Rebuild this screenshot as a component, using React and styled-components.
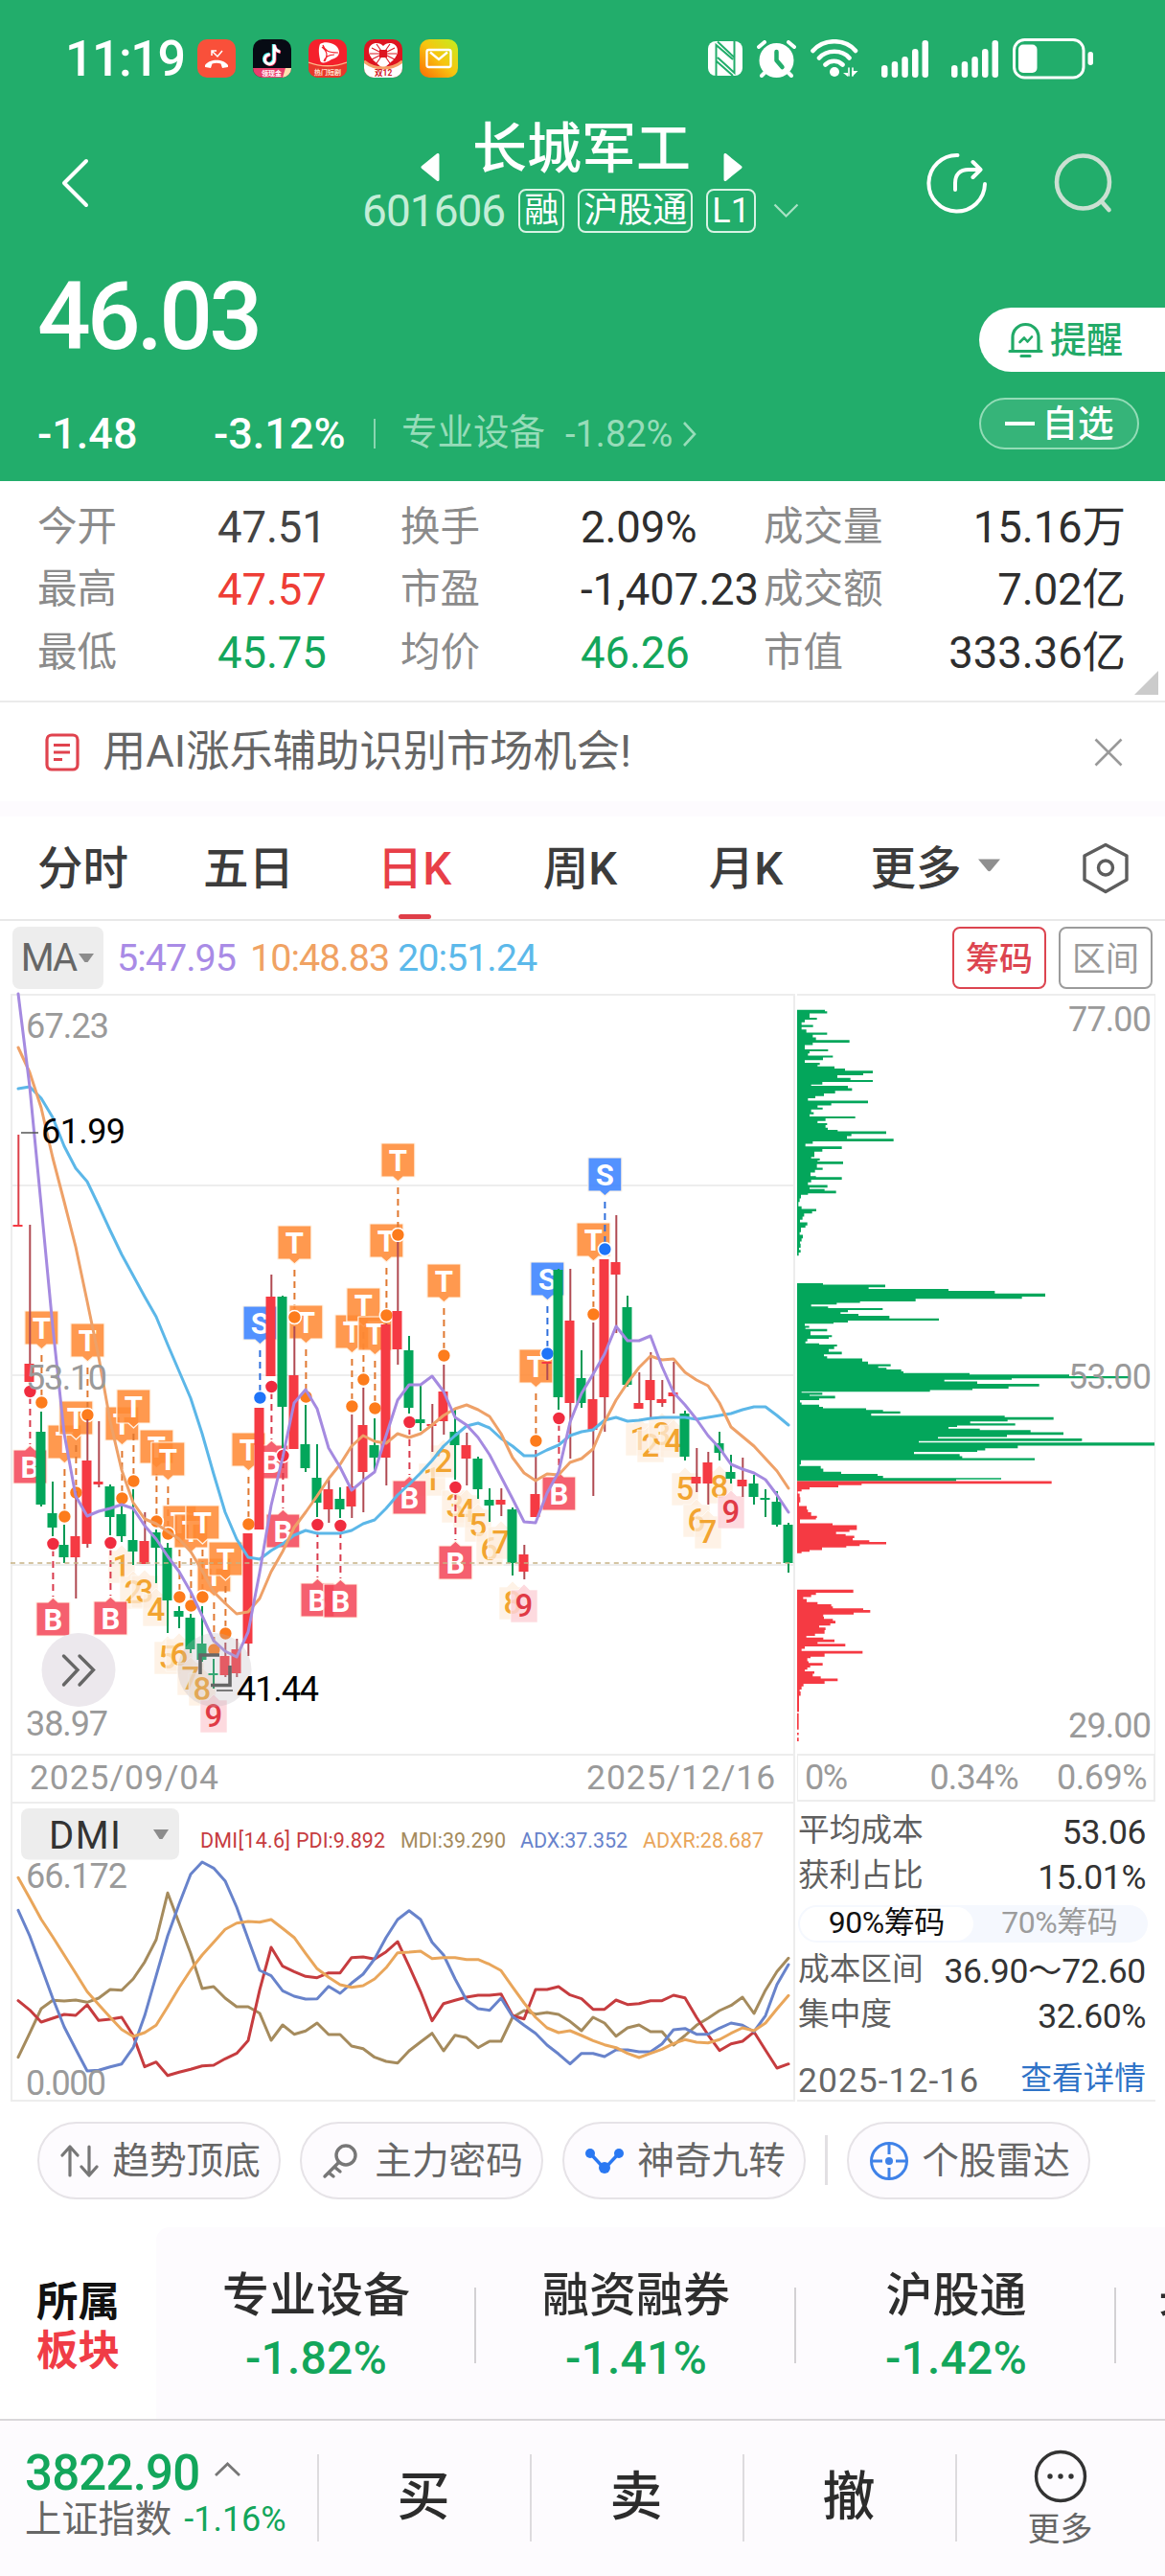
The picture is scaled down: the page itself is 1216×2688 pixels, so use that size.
import styled, { createGlobalStyle } from "styled-components";

const GREEN = "#03a65b";
const RED = "#f53a43";
const GREY = "#9a9a9a";

// [open/close direction, high, body top, body bottom, low]
const candles = [
  ["r", 1183, 1277, 1279, 1278], ["r", 1277, 1422, 1441, 1441], ["g", 1472, 1493, 1569, 1571],
  ["g", 1545, 1578, 1593, 1602], ["g", 1590, 1611, 1624, 1630], ["r", 1555, 1602, 1624, 1667],
  ["r", 1480, 1523, 1610, 1614], ["r", 1482, 1545, 1548, 1551], ["g", 1548, 1550, 1582, 1601],
  ["g", 1568, 1579, 1602, 1608], ["g", 1553, 1606, 1618, 1632], ["r", 1577, 1607, 1631, 1631],
  ["g", 1595, 1598, 1614, 1651], ["g", 1609, 1614, 1669, 1703], ["g", 1675, 1680, 1686, 1698],
  ["g", 1683, 1687, 1720, 1724], ["g", 1675, 1714, 1731, 1733], ["g", 1730, 1745, 1747, 1761],
  ["r", 1713, 1727, 1747, 1749], ["r", 1709, 1720, 1745, 1749], ["r", 1599, 1599, 1714, 1727],
  ["r", 1468, 1468, 1595, 1595], ["r", 1329, 1352, 1435, 1435], ["g", 1351, 1352, 1467, 1510],
  ["r", 1383, 1434, 1511, 1511], ["g", 1465, 1506, 1531, 1535], ["g", 1506, 1541, 1567, 1582],
  ["r", 1543, 1553, 1574, 1588], ["g", 1551, 1563, 1574, 1583], ["r", 1475, 1550, 1571, 1583],
  ["r", 1447, 1486, 1535, 1577], ["g", 1479, 1507, 1520, 1533], ["r", 1380, 1381, 1520, 1549],
  ["r", 1295, 1367, 1407, 1423], ["g", 1393, 1408, 1468, 1474], ["g", 1445, 1480, 1484, 1492],
  ["r", 1464, 1485, 1487, 1514], ["r", 1423, 1451, 1482, 1496], ["g", 1468, 1493, 1507, 1543],
  ["r", 1494, 1507, 1521, 1549], ["g", 1519, 1521, 1553, 1563], ["g", 1552, 1564, 1570, 1587],
  ["r", 1552, 1564, 1569, 1581], ["g", 1572, 1574, 1630, 1643], ["r", 1611, 1621, 1639, 1647],
  ["r", 1512, 1558, 1582, 1582], ["r", 1420, 1420, 1422, 1439], ["g", 1323, 1324, 1457, 1470],
  ["r", 1323, 1377, 1463, 1521], ["g", 1408, 1437, 1463, 1468], ["r", 1379, 1459, 1491, 1560],
  ["r", 1313, 1313, 1457, 1493], ["r", 1267, 1316, 1329, 1390], ["g", 1351, 1363, 1444, 1446],
  ["r", 1431, 1463, 1469, 1469], ["r", 1410, 1439, 1460, 1478], ["r", 1439, 1459, 1463, 1467],
  ["r", 1420, 1452, 1456, 1474], ["g", 1471, 1474, 1519, 1523], ["r", 1510, 1540, 1547, 1556],
  ["r", 1514, 1525, 1547, 1569], ["g", 1493, 1505, 1515, 1523], ["g", 1517, 1535, 1542, 1547],
  ["r", 1520, 1543, 1550, 1561], ["g", 1538, 1547, 1561, 1569], ["g", 1553, 1562, 1564, 1582],
  ["g", 1555, 1566, 1590, 1592], ["g", 1588, 1590, 1630, 1640],
];

const ma5 = [1036, 1133, 1257, 1383, 1495, 1560, 1581, 1576, 1573, 1569, 1573, 1591, 1605, 1623, 1639, 1660, 1685, 1711, 1722, 1728, 1702, 1640, 1570, 1520, 1463, 1449, 1469, 1510, 1530, 1554, 1544, 1535, 1497, 1460, 1444, 1444, 1435, 1451, 1478, 1486, 1499, 1517, 1540, 1563, 1587, 1588, 1557, 1535, 1483, 1453, 1433, 1412, 1383, 1398, 1398, 1393, 1425, 1452, 1465, 1480, 1497, 1510, 1527, 1532, 1536, 1543, 1559, 1577];
const ma10 = [1092, 1118, 1155, 1207, 1253, 1300, 1357, 1415, 1482, 1533, 1567, 1584, 1589, 1597, 1605, 1618, 1638, 1660, 1672, 1683, 1681, 1667, 1639, 1618, 1593, 1577, 1560, 1542, 1527, 1508, 1497, 1503, 1505, 1495, 1499, 1495, 1486, 1476, 1469, 1465, 1470, 1477, 1495, 1520, 1536, 1544, 1537, 1538, 1525, 1521, 1511, 1483, 1460, 1442, 1426, 1414, 1418, 1417, 1431, 1439, 1445, 1463, 1488, 1498, 1508, 1521, 1534, 1552];
const ma20 = [1135, 1133, 1145, 1165, 1195, 1218, 1232, 1257, 1283, 1308, 1330, 1352, 1373, 1402, 1430, 1458, 1495, 1537, 1577, 1605, 1624, 1626, 1617, 1610, 1601, 1596, 1599, 1599, 1599, 1596, 1589, 1585, 1573, 1559, 1548, 1536, 1523, 1508, 1497, 1487, 1484, 1489, 1500, 1508, 1518, 1518, 1512, 1507, 1497, 1493, 1491, 1481, 1478, 1482, 1481, 1479, 1478, 1478, 1478, 1480, 1478, 1476, 1474, 1470, 1467, 1467, 1476, 1486];

// [letter, candle index, flag top]
const flags = [
  ["B", 1, 1512], ["T", 2, 1367], ["B", 3, 1671], ["T", 4, 1486], ["T", 5, 1461], ["T", 6, 1380],
  ["B", 8, 1670], ["T", 9, 1467], ["T", 10, 1449], ["T", 12, 1491], ["T", 13, 1504], ["T", 14, 1570],
  ["T", 15, 1579], ["T", 16, 1570], ["T", 17, 1625], ["T", 18, 1608], ["T", 20, 1494], ["S", 21, 1362],
  ["B", 22, 1507], ["B", 23, 1579], ["T", 24, 1278], ["T", 25, 1361], ["B", 26, 1651], ["B", 28, 1652],
  ["T", 29, 1371], ["T", 30, 1343], ["T", 31, 1373], ["T", 32, 1276], ["T", 33, 1192], ["B", 34, 1544],
  ["T", 37, 1318], ["B", 38, 1612], ["T", 45, 1407], ["S", 46, 1316], ["B", 47, 1540], ["T", 50, 1275],
  ["S", 51, 1207],
];
const flagColors = {
  T: ["#ff8a35", "#fd7c1c", "#e07830"],
  S: ["#3982ff", "#1f74f8", "#2f6fdc"],
  B: ["#f4485a", "#f02c3f", "#d93a4c"],
};

// [digit, candle index, centre]
const turns = [
  [1, 9, 1633], [2, 10, 1660], [3, 11, 1659], [4, 12, 1678], [5, 13, 1728], [6, 14, 1725], [7, 15, 1750],
  [8, 16, 1761], [9, 17, 1789], [1, 36, 1542], [2, 37, 1523], [3, 38, 1570], [4, 39, 1575], [5, 40, 1590],
  [6, 41, 1615], [7, 42, 1608], [8, 43, 1671], [9, 44, 1674], [1, 54, 1500], [2, 55, 1507], [3, 56, 1495],
  [4, 57, 1502], [5, 58, 1552], [6, 59, 1585], [7, 60, 1597], [8, 61, 1550], [9, 62, 1576],
];

const chipsAbove = [
  [[42, 123], [45, 130], [49, 75], [57, 98], [61, 60], [66, 50], [71, 86], [75, 50], [80, 65], [86, 130], [90, 85], [95, 95], [100, 200], [105, 85], [110, 60], [118, 133], [122, 75], [126, 70], [130, 148], [134, 117], [139, 60], [144, 107], [148, 100], [151, 153], [155, 186], [159, 273], [164, 243], [168, 162], [173, 203], [177, 273], [181, 115], [186, 80], [188, 195], [193, 208], [198, 155], [203, 120], [208, 93], [212, 70], [217, 258], [222, 143], [226, 100], [230, 116], [234, 80], [239, 88], [243, 75], [247, 218], [251, 125], [256, 100], [260, 130], [264, 125], [269, 132], [273, 163], [276, 315], [281, 206], [285, 192], [290, 338], [295, 85], [300, 62], [305, 176], [310, 115], [315, 90], [325, 80], [328, 107], [332, 100], [334, 180], [339, 98], [346, 116], [350, 92], [355, 78], [362, 95], [364, 176], [369, 80], [374, 70], [379, 131], [384, 75], [387, 122], [390, 158], [395, 70], [398, 48], [405, 44], [412, 40], [420, 50], [425, 96], [430, 83], [434, 58], [440, 53], [446, 45], [451, 68], [457, 62], [461, 48], [470, 44], [475, 54], [482, 50], [488, 45], [492, 47], [500, 42], [504, 47], [509, 41], [515, 36]],
  [[568, 117], [571, 312], [576, 260], [579, 510], [583, 655], [588, 813], [594, 740], [598, 407], [603, 233], [606, 160], [609, 80], [613, 133], [616, 304], [620, 195], [624, 172], [627, 228], [631, 325], [636, 480], [640, 195], [644, 150], [646, 60], [650, 74], [654, 62], [656, 130], [661, 78], [668, 145], [672, 135], [675, 68], [680, 62], [684, 105], [686, 161], [690, 152], [695, 135], [700, 176], [705, 120], [709, 130], [713, 240], [719, 258], [724, 329], [728, 290], [731, 316], [734, 362], [738, 369], [741, 576], [744, 888], [747, 1077], [751, 708], [754, 497], [757, 600], [762, 794], [767, 698], [771, 585], [774, 452], [777, 50], [779, 115], [783, 75], [785, 155], [790, 105], [793, 45], [798, 50], [802, 105], [806, 117], [809, 252], [812, 305], [815, 359], [819, 268], [823, 686], [826, 839], [831, 695], [834, 578], [838, 719], [842, 537], [845, 510], [848, 608], [851, 767], [855, 870], [860, 693], [864, 477], [867, 928], [872, 417], [875, 1155], [881, 727], [886, 625], [890, 600], [893, 402], [897, 545], [901, 553], [905, 780], [909, 48], [917, 44], [920, 110], [925, 118], [931, 174], [935, 288], [939, 305], [943, 675], [946, 534], [949, 36]],
];
const chipsBelow = [
  [[949, 833], [954, 238], [957, 165], [961, 75], [965, 50], [969, 38], [973, 44], [980, 46], [990, 42], [997, 66], [1004, 70], [1009, 80], [1016, 98], [1020, 95], [1023, 45], [1030, 147], [1034, 223], [1043, 200], [1047, 158], [1051, 188], [1054, 215], [1059, 210], [1063, 262], [1066, 315], [1071, 232], [1074, 190], [1077, 114], [1082, 75], [1085, 50], [1088, 36]],
  [[1158, 212], [1164, 95], [1168, 80], [1172, 55], [1176, 66], [1182, 100], [1186, 143], [1190, 148], [1194, 243], [1197, 265], [1202, 213], [1206, 118], [1210, 120], [1214, 148], [1218, 156], [1223, 140], [1227, 105], [1231, 125], [1236, 122], [1243, 92], [1247, 65], [1250, 118], [1254, 153], [1259, 100], [1262, 187], [1267, 60], [1272, 50], [1276, 241], [1281, 122], [1287, 78], [1290, 68], [1296, 72], [1299, 116], [1304, 77], [1308, 68], [1312, 60], [1315, 90], [1320, 85], [1325, 110], [1329, 163], [1334, 122], [1339, 56], [1344, 50], [1350, 44], [1354, 47], [1362, 42], [1393, 36], [1396, 41], [1427, 36], [1433, 41], [1438, 36], [1443, 41], [1450, 36]],
];

const dmi = [
  ["#a58b5d", [980, 905, 828, 802, 804, 801, 808, 795, 768, 770, 735, 682, 612, 466, 560, 655, 765, 759, 795, 822, 822, 842, 927, 879, 908, 898, 873, 909, 909, 945, 953, 980, 993, 998, 960, 932, 905, 960, 911, 919, 950, 930, 930, 855, 834, 845, 840, 846, 868, 897, 855, 873, 914, 888, 879, 900, 900, 942, 912, 880, 858, 834, 818, 792, 843, 770, 712, 670]],
  ["#c63c3f", [803, 832, 870, 858, 846, 849, 816, 865, 861, 855, 912, 1010, 995, 1037, 1027, 1018, 1007, 1005, 985, 968, 928, 770, 636, 695, 712, 727, 731, 716, 716, 668, 666, 673, 650, 618, 695, 775, 866, 812, 802, 792, 786, 786, 782, 850, 860, 768, 768, 759, 785, 797, 830, 830, 801, 815, 812, 803, 803, 786, 794, 855, 910, 959, 938, 930, 901, 958, 1014, 1001]],
  ["#6883cb", [520, 600, 697, 795, 885, 955, 1023, 1021, 1010, 1001, 950, 850, 725, 600, 500, 407, 369, 388, 428, 510, 610, 708, 725, 772, 789, 798, 797, 758, 780, 748, 720, 672, 605, 549, 521, 549, 620, 660, 735, 802, 828, 833, 795, 853, 880, 905, 942, 970, 1001, 968, 968, 978, 957, 957, 963, 963, 938, 894, 890, 908, 908, 889, 873, 880, 900, 850, 752, 690]],
  ["#e9a65b", [418, 482, 548, 603, 660, 717, 775, 815, 855, 893, 915, 903, 880, 822, 762, 707, 660, 620, 580, 560, 555, 557, 549, 577, 605, 655, 703, 730, 753, 761, 756, 735, 700, 653, 651, 648, 671, 668, 668, 674, 674, 689, 709, 760, 810, 855, 888, 903, 897, 912, 928, 941, 950, 968, 981, 968, 955, 937, 925, 933, 935, 925, 905, 888, 897, 873, 829, 787]],
];

const stats = [
  [["今开", "47.51", "#444"], ["换手", "2.09%"], ["成交量", "15.16万"]],
  [["最高", "47.57", "#ee3d35"], ["市盈", "-1,407.23"], ["成交额", "7.02亿"]],
  [["最低", "45.75", "#13a65b"], ["均价", "46.26", "#13a65b"], ["市值", "333.36亿"]],
];

const px = (k) => 19 + 12 * k;
const linePoints = (ys) => ys.map((y, k) => `${px(k)},${y}`).join(" ");

const stepPath = (rows) => {
  let d = `M36 ${rows[0][0]}`;
  rows.forEach(([y, x]) => {
    d += `V${y}H${x}`;
  });
  return d + "H36Z";
};

const ChartText = ({ x, y, w, size = 36, fill = GREY, anchor = "start", children }) => (
  <text x={x} y={y} textLength={w} fontSize={size} fill={fill} textAnchor={anchor} lengthAdjust="spacing">
    {children}
  </text>
);

const Flag = ({ kind, k, top }) => {
  const x = px(k) + 0.4;
  const fill = flagColors[kind][0];
  const up = kind === "B";
  const d = up
    ? `M${x - 17.5} ${top}h12l5.5-5 5.5 5h12v35h-35z`
    : `M${x - 17.5} ${top}h35v35h-12l-5.5 5-5.5-5h-12z`;
  return (
    <g>
      <line
        x1={x} x2={x}
        y1={up ? top - 55 : top + 46}
        y2={up ? top - 6 : top + 90}
        stroke={flagColors[kind][2]} strokeWidth="2" strokeDasharray="7 5"
      />
      <path d={d} fill={fill} fillOpacity="0.87" stroke="#fff3e6" strokeWidth="1.2" strokeLinejoin="round" />
      <text x={x} y={top + 28.5} fontSize="31" fontWeight="700" fill="#fff" textAnchor="middle">{kind}</text>
    </g>
  );
};

const FlagDot = ({ kind, k, top }) => (
  <circle
    cx={px(k) + 0.4}
    cy={kind === "B" ? top - 61 : top + 95.5}
    r="7" fill={flagColors[kind][1]} stroke="#fff" strokeWidth="1.6"
  />
);

const Turn = ({ n, k, y }) => {
  const last = n === 9;
  const x = px(k);
  return (
    <g>
      <path
        d={`M${x - 14} ${y - 16}h8l6-6 6 6h8v34h-28z`}
        fill={last ? "#fdd3d9" : "#fdeede"} fillOpacity={last ? 0.85 : 0.75}
        stroke="#fff" strokeOpacity="0.6" strokeWidth="1"
      />
      <text x={x} y={y + 12} fontSize="33" fontWeight="500" fill={last ? "#e03a45" : "#f2a430"} textAnchor="middle">{n}</text>
    </g>
  );
};

const CandleChart = () => (
  <ChartSvg viewBox="13 1038 815 791" width="815" height="791">
    {[1236, 1434, 1632].map((y) => (
      <line key={y} x1="13" x2="828" y1={y} y2={y} stroke="#ededed" strokeWidth="2" />
    ))}
    {turns.map(([n, k, y], i) => <Turn key={i} n={n} k={k} y={y} />)}
    {flags.map(([kind, k, top]) => <Flag key={k} kind={kind} k={k} top={top} />)}
    {flags.map(([kind, k, top]) => <FlagDot key={k} kind={kind} k={k} top={top} />)}
    {candles.map(([dir, hi, top, bottom, lo], k) => {
      const x = px(k) + (dir === "r" ? 0.3 : 0);
      return (
        <g key={k}>
          <line x1={x} x2={x} y1={hi} y2={Math.max(lo, bottom)} stroke={dir === "r" ? (k === 0 ? "#dc4049" : "#b04a52") : "#069a55"} strokeWidth="2" />
          <rect x={px(k) - 5.5} y={top} width="10" height={bottom - top} fill={dir === "r" ? RED : GREEN} />
        </g>
      );
    })}
    <line x1="11" x2="829" y1="1630" y2="1630" stroke="#c6b184" strokeWidth="1.7" strokeDasharray="5 4.4" />
    <polyline points={linePoints(ma20)} stroke="#5cb7e8" />
    <polyline points={linePoints(ma10)} stroke="#eea168" />
    <polyline points={linePoints(ma5)} stroke="#a58ae0" />
    <ChartText x={27} y={1082} w={87}>67.23</ChartText>
    <ChartText x={27} y={1449} w={85}>53.10</ChartText>
    <ChartText x={27} y={1810} w={86}>38.97</ChartText>
    <line x1="22" x2="40" y1="1181" y2="1181" stroke="#555" strokeWidth="1.5" />
    <ChartText x={43} y={1192} w={88} fill="#000">61.99</ChartText>

    <circle cx="82" cy="1741.5" r="38.5" fill="#ece8ed" />
    <path d="M66.5 1727L81 1741.5 66.5 1757M83 1727l14.5 14.5L83 1757" fill="none" stroke="#666" strokeWidth="3.4" strokeLinecap="round" />
    <circle cx="224" cy="1741.5" r="38.5" fill="#b9b3ba" fillOpacity="0.28" />
    <path d="M209 1746v-20h20M240 1737v20.500h-20" fill="none" stroke="#666" strokeWidth="3.6" />
    <line x1="226" x2="243" y1="1763" y2="1763" stroke="#555" strokeWidth="1.5" />
    <ChartText x={247} y={1774} w={86} fill="#000">41.44</ChartText>
  </ChartSvg>
);

const ChipsChart = () => (
  <ChipsWrap>
    <ChartSvg viewBox="36 14.8 1119 1459" width="373" height="791" preserveAspectRatio="none">
      {chipsAbove.map((rows, i) => <path key={i} d={stepPath(rows)} fill={GREEN} />)}
      {chipsBelow.map((rows, i) => <path key={i} d={stepPath(rows)} fill={RED} />)}
    </ChartSvg>
    <ChipsScale>
      <Num $size={36} $ls={-0.9}>77.00</Num>
      <Num $size={36} $ls={-0.9}>53.00</Num>
      <Num $size={36} $ls={-0.9}>29.00</Num>
    </ChipsScale>
  </ChipsWrap>
);

const DmiChart = () => (
  <ChartSvg viewBox="13 1882 815 309" width="815" height="309">
    {dmi.map(([color, ys]) => (
      <polyline key={color} points={linePoints(ys.map((y) => +(1820 + y / 3).toFixed(1)))} stroke={color} />
    ))}
    <rect x="22" y="1887" width="165" height="53.500" rx="8" fill="#ededed" />
    <ChartText x={51} y={1928.5} w={75} size={40} fill="#333">DMI</ChartText>
    <path d="M160 1909h16l-6.500 10h-3z" fill="#8c8c8c" />
    <ChartText x={209} y={1928} w={94} size={21.5} fill="#c63c3f">DMI[14.6]</ChartText>
    <ChartText x={309} y={1928} w={93} size={21.5} fill="#c63c3f">PDI:9.892</ChartText>
    <ChartText x={418} y={1928} w={110} size={21.5} fill="#a58b5d">MDI:39.290</ChartText>
    <ChartText x={543} y={1928} w={112} size={21.5} fill="#6883cb">ADX:37.352</ChartText>
    <ChartText x={671} y={1928} w={126} size={21.5} fill="#e9a65b">ADXR:28.687</ChartText>
    <ChartText x={27} y={1969.5} w={106}>66.172</ChartText>
    <ChartText x={27} y={2185.5} w={84}>0.000</ChartText>
  </ChartSvg>
);

const Signal = () => (
  <svg width="49" height="39" viewBox="0 0 49 39" fill="#fff">
    <rect x="0" y="26" width="6.500" height="13" rx="3.200" />
    <rect x="10.700" y="22" width="6.500" height="17" rx="3.200" />
    <rect x="21.300" y="17" width="6.500" height="22" rx="3.200" />
    <rect x="32" y="9" width="6.500" height="30" rx="3.200" />
    <rect x="42.500" y="0" width="6.500" height="39" rx="3.200" />
  </svg>
);

const StatusBar = () => (
  <Status>
    <Clock>11:19</Clock>
    <AppIcons>
      <svg width="40" height="40" viewBox="0 0 40 40">
        <rect width="40" height="40" rx="10" fill="#f9503a" />
        <path d="M8 27c5-7 19-7 24 0v2l-6 1-1.500-4.500c-3-1-6-1-9 0L14 30l-6-1z" fill="#fff" />
        <path d="M15 17v-5h5M15 12l6 6 5-6" fill="none" stroke="#fff" strokeWidth="1.500" />
      </svg>
      <svg width="40" height="40" viewBox="0 0 40 40">
        <clipPath id="appClip"><rect width="40" height="40" rx="10" /></clipPath>
        <g clipPath="url(#appClip)">
          <rect width="40" height="40" fill="#070b14" />
          <path d="M21.500 5v15.500a5 5 0 1 1-4.500-5M21.500 6c.7 4 3 6 6 6.500" fill="none" stroke="#35e3e3" strokeWidth="3.400" />
          <path d="M23 6v15.500a5 5 0 1 1-4.500-5M23 7c.7 4 3 6 6 6.500" fill="none" stroke="#f5365c" strokeWidth="3.200" />
          <path d="M22.300 5.500V21a5 5 0 1 1-4.500-5M22.300 6.500c.7 4 3 6 6 6.500" fill="none" stroke="#fff" strokeWidth="3" />
          <path d="M0 30h40v10H0z" fill="#e93f6d" />
          <path d="M34 30h6v10h-9z" fill="#ffe3b0" />
          <text x="9" y="37.500" fontSize="7" fontWeight="700" fill="#fff">领现金</text>
        </g>
      </svg>
      <svg width="40" height="40" viewBox="0 0 40 40">
        <g clipPath="url(#appClip)">
          <rect width="40" height="40" fill="#f5202c" />
          <path d="M12 5c6-4 19-1 20 8 0 5-4 7-8 8-6 4-12 5-12 0-1-5-2-11 0-16z" fill="#fff" />
          <path d="M15 6c2 6 6 8 16 8M27 16c-5 0-9 1-11 7M14 8c6 5 6 8 3 15" fill="none" stroke="#f5202c" strokeWidth="1.200" />
          <path d="M0 24c12 5 28 5 40 0v16H0z" fill="#e8372b" />
          <path d="M0 24c12 5 28 5 40 0" fill="none" stroke="#ffb98a" strokeWidth="1.300" />
          <text x="6" y="36.500" fontSize="7" fontWeight="700" fill="#ffe2cf">热门短剧</text>
        </g>
      </svg>
      <svg width="40" height="40" viewBox="0 0 40 40">
        <g clipPath="url(#appClip)">
          <rect width="40" height="40" fill="#dd1420" />
          <path d="M20 7c4-5 15-4 15 5 0 8-8 12-15 19C13 24 5 20 5 12c0-9 11-10 15-5z" fill="#fff" />
          <path d="M8 9l24 12M32 9L8 21M13 5l14 20M27 5L13 25M6 15h28" stroke="#dd1420" strokeWidth="1.100" />
          <rect x="16" y="11" width="8" height="8" fill="#dd1420" />
          <path d="M0 23c6 5 12 7 20 7s14-2 20-7v17H0z" fill="#fff" />
          <path d="M0 23c6 5 12 7 20 7s14-2 20-7" fill="none" stroke="#f6a067" strokeWidth="3" />
          <text x="11" y="38" fontSize="8.500" fontWeight="700" fill="#d21825">双12</text>
        </g>
      </svg>
      <svg width="40" height="40" viewBox="0 0 40 40">
        <linearGradient id="mailBg" x1="0" y1="1" x2="1" y2="0">
          <stop offset="0" stopColor="#fb6a05" />
          <stop offset="0.5" stopColor="#f8c40f" />
          <stop offset="1" stopColor="#c3ef20" />
        </linearGradient>
        <rect width="40" height="40" rx="10" fill="url(#mailBg)" />
        <rect x="7.500" y="11" width="25" height="18" rx="2" fill="none" stroke="#fff" strokeWidth="2.300" />
        <path d="M11 13.500l9 7.500 9-7.500" fill="none" stroke="#fff" strokeWidth="2.300" />
      </svg>
    </AppIcons>
    <SystemIcons>
      <svg width="36" height="36" viewBox="0 0 36 36">
        <rect width="36" height="36" rx="8" fill="#fff" />
        <path d="M8.500 36V4L26 19M10 0.500l18 17M27.500 0v33L10 17M26 36L9 21" fill="none" stroke="#22ad6b" strokeWidth="2" />
      </svg>
      <svg width="41" height="39" viewBox="0 0 41 39">
        <circle cx="20.500" cy="21" r="18" fill="#fff" />
        <path d="M2 7l6-5M39 7l-6-5M9 33l-4 4M32 33l4 4" stroke="#fff" strokeWidth="4" strokeLinecap="round" />
        <path d="M20.500 12v9l6 7" fill="none" stroke="#22ad6b" strokeWidth="4.500" strokeLinecap="round" strokeLinejoin="round" />
      </svg>
      <svg width="50" height="40" viewBox="0 0 50 40" fill="none" stroke="#fff" strokeWidth="4.600" strokeLinecap="round">
        <path d="M2.500 12C14-1 36-1 47 12M9 19.500c8-9 24-9 31.500 0M15.500 26.500c5-5 13-5 18 0" />
        <circle cx="25" cy="34" r="5" fill="#fff" stroke="none" />
        <path d="M39 29v10l-5-4h5zM43 29v10M43.500 33l6 0-6 6z" fill="#fff" stroke="none" />
        <path d="M40 30v8M44 30v8" strokeWidth="1.600" />
      </svg>
      <Signal />
      <Signal />
      <svg width="86" height="43" viewBox="0 0 86 43">
        <rect x="1.500" y="1.500" width="72.500" height="39.500" rx="11" fill="none" stroke="#fff" strokeWidth="3" />
        <rect x="6" y="6.500" width="19.500" height="29.500" rx="5" fill="#fff" />
        <rect x="78.500" y="14" width="5.500" height="14" rx="2.700" fill="#fff" />
      </svg>
    </SystemIcons>
  </Status>
);

const Header = () => (
  <Top>
    <StatusBar />
    <Nav>
      <svg width="30" height="52" viewBox="0 0 30 52">
        <path d="M27 3L4 26l23 23" fill="none" stroke="#fff" strokeWidth="4" strokeLinecap="round" strokeLinejoin="round" />
      </svg>
      <TitleBlock>
        <TitleRow>
          <svg width="20" height="29" viewBox="0 0 20 29"><path d="M18 1.500v26L2 14.500z" fill="#fff" stroke="#fff" strokeWidth="3" strokeLinejoin="round" /></svg>
          <Title>长城军工</Title>
          <svg width="20" height="29" viewBox="0 0 20 29"><path d="M2 1.500v26l16-13z" fill="#fff" stroke="#fff" strokeWidth="3" strokeLinejoin="round" /></svg>
        </TitleRow>
        <CodeRow>
          <Num $size={46} $ls={-1} $color="#c3edd7">601606</Num>
          <Tag>融</Tag>
          <Tag>沪股通</Tag>
          <Tag>L1</Tag>
          <svg width="27" height="16" viewBox="0 0 27 16"><path d="M1.500 1.500L13.500 13.500l12-12" fill="none" stroke="#a8e2c4" strokeWidth="2.200" /></svg>
        </CodeRow>
      </TitleBlock>
      <NavIcons>
        <svg width="64" height="64" viewBox="0 0 64 64" fill="none" stroke="#fff" strokeWidth="4" strokeLinecap="round" strokeLinejoin="round">
          <path d="M32.500 3A29.300 29.300 0 1 0 61 33" />
          <path d="M30 39v-7c0-9 5-14 14-14h11M48.500 10l8 8-8 8" />
        </svg>
        <svg width="62" height="64" viewBox="0 0 62 64" fill="none" stroke="#cae0d2" strokeWidth="4.600" strokeLinecap="round">
          <circle cx="30.500" cy="31" r="27.500" />
          <path d="M49.500 51l8 9" />
        </svg>
      </NavIcons>
    </Nav>
    <PriceRow>
      <Num $size={98} $ls={-3.8} $weight={500} $color="#fff">46.03</Num>
      <RemindPill>
        <svg width="37" height="40" viewBox="0 0 37 40" fill="none" stroke="#22aa68" strokeWidth="3.200" strokeLinejoin="round" strokeLinecap="round">
          <path d="M5 31V17a13.500 13.500 0 0 1 27 0v14M2 31.500h33M14 36.500h9" />
          <path d="M12.500 22l4.500-4.500 3.500 4 4.500-5" strokeWidth="2.600" />
        </svg>
        提醒
      </RemindPill>
    </PriceRow>
    <ChangeRow>
      <Change $w={184}>-1.48</Change>
      <Change $w={165}>-3.12%</Change>
      <ThinLine />
      <Industry>专业设备</Industry>
      <Num $size={38} $color="#97dcb9">-1.82%</Num>
      <svg width="16" height="28" viewBox="0 0 16 28"><path d="M2 2l11 12L2 26" fill="none" stroke="#97dcb9" strokeWidth="2.600" /></svg>
      <WatchPill><Dash />自选</WatchPill>
    </ChangeRow>
  </Top>
);

const Quote = () => (
  <StatsPanel>
    {stats.flat().map(([label, value, color], i) => (
      <Stat key={label} $wide={i % 3 === 2}>
        <StatLabel>{label}</StatLabel>
        <StatValue $color={color}>{value}</StatValue>
      </Stat>
    ))}
    <Corner />
  </StatsPanel>
);

const App = () => (
  <Page>
    <GlobalStyle />
    <Header />
    <Quote />
    <Banner>
      <svg width="36" height="40" viewBox="0 0 36 40" fill="none" stroke="#e0434e" strokeWidth="3.200">
        <rect x="2" y="2" width="32" height="36" rx="5" />
        <path d="M9 12.500h17M9 20h17M9 27.500h9" />
      </svg>
      <BannerText>用AI涨乐辅助识别市场机会!</BannerText>
      <svg width="30" height="30" viewBox="0 0 30 30"><path d="M1.500 1.500l27 27M28.500 1.500l-27 27" stroke="#999" strokeWidth="2.600" /></svg>
    </Banner>
    <Band />
    <Tabs>
      {["分时", "五日", "日K", "周K", "月K"].map((t) => (
        <Tab key={t} $active={t === "日K"}>{t}</Tab>
      ))}
      <Tab $more>
        更多
        <svg width="25" height="14" viewBox="0 0 25 14"><path d="M1 0.500h23L14 12.500q-1.500 1.500-3 0z" fill="#8f8f8f" /></svg>
      </Tab>
      <svg width="50" height="54" viewBox="0 0 50 54" fill="none" stroke="#5d5d5d" strokeWidth="3.400" strokeLinejoin="round">
        <path d="M25 2.500L47 14v25L25 51.500 3 39V14z" />
        <circle cx="25" cy="26.500" r="7.500" />
      </svg>
    </Tabs>
    <MaRow>
      <MaChip>
        MA
        <svg width="18" height="10" viewBox="0 0 18 10"><path d="M1 0h16l-6.500 9h-3z" fill="#8c8c8c" /></svg>
      </MaChip>
      <MaValue $w={139} $color="#a98be6">5:47.95</MaValue>
      <MaValue $w={154} $color="#f0a263">10:48.83</MaValue>
      <MaValue $w={160} $color="#5cb9ea">20:51.24</MaValue>
      <ModeButton $active>筹码</ModeButton>
      <ModeButton>区间</ModeButton>
    </MaRow>
    <Charts>
      <Column>
        <Box $h={795}><CandleChart /></Box>
        <Dates>
          <Num $size={35.5} $ls={0.9}>2025/09/04</Num>
          <Num $size={35.5} $ls={0.9}>2025/12/16</Num>
        </Dates>
        <Box $h={311} $noTop><DmiChart /></Box>
      </Column>
      <Column>
        <SideBox><ChipsChart /></SideBox>
        <Percents>
          <Num $size={36} $ls={-1.5}>0%</Num>
          <Num $size={36} $ls={-0.8}>0.34%</Num>
          <Num $size={36} $ls={-0.5}>0.69%</Num>
        </Percents>
        <Info>
          <InfoRow><span>平均成本</span><Num $size={35.5} $ls={-0.4} $color="#333">53.06</Num></InfoRow>
          <InfoRow><span>获利占比</span><Num $size={35.5} $ls={-0.4} $color="#333">15.01%</Num></InfoRow>
          <Toggle>
            <ToggleItem $active>90%筹码</ToggleItem>
            <ToggleItem>70%筹码</ToggleItem>
          </Toggle>
          <InfoRow><span>成本区间</span><Num $size={35.5} $ls={-0.3} $color="#333">36.90～72.60</Num></InfoRow>
          <InfoRow><span>集中度</span><Num $size={35.5} $ls={-0.4} $color="#333">32.60%</Num></InfoRow>
          <InfoFoot><Num $size={35.5} $ls={1} $color="#666">2025-12-16</Num><a>查看详情</a></InfoFoot>
        </Info>
      </Column>
    </Charts>
    <Tools>
      <Tool>
        <svg width="42" height="34" viewBox="0 0 42 34" fill="none" stroke="#777" strokeWidth="3.200" strokeLinecap="round" strokeLinejoin="round">
          <path d="M11 32V3M3 11l8-9 8 9M31 2v29M23 23l8 9 8-9" />
        </svg>
        趋势顶底
      </Tool>
      <Tool>
        <svg width="42" height="38" viewBox="0 0 42 38" fill="none" stroke="#777" strokeWidth="3.400" strokeLinecap="round" strokeLinejoin="round">
          <circle cx="25" cy="13" r="10" />
          <path d="M18 20L3 35M7 31l5 4M13 25l6 5" />
        </svg>
        主力密码
      </Tool>
      <Tool>
        <svg width="42" height="28" viewBox="0 0 42 28">
          <path d="M6 6l15 16L36 6" fill="none" stroke="#2a78f2" strokeWidth="3.400" />
          <g fill="#2a78f2"><circle cx="6" cy="6" r="5" /><circle cx="36" cy="6" r="5" /><circle cx="21" cy="21" r="6" /></g>
        </svg>
        神奇九转
      </Tool>
      <ToolLine />
      <Tool>
        <svg width="42" height="42" viewBox="0 0 42 42" fill="none" stroke="#3f82e8" strokeWidth="3">
          <circle cx="21" cy="21" r="18.500" />
          <path d="M21 2v12M21 28v12M2 21h12M28 21h12" />
          <circle cx="21" cy="21" r="4" fill="#3f82e8" stroke="none" />
        </svg>
        个股雷达
      </Tool>
    </Tools>
    <Sectors>
      <SectorTitle>所属<em>板块</em></SectorTitle>
      <SectorList>
        <Sector><span>专业设备</span><SectorPct>-1.82%</SectorPct></Sector>
        <Sector><span>融资融券</span><SectorPct>-1.41%</SectorPct></Sector>
        <Sector><span>沪股通</span><SectorPct>-1.42%</SectorPct></Sector>
        <Sector><span>央国企改革</span></Sector>
      </SectorList>
    </Sectors>
    <BottomBar>
      <IndexBlock>
        <IndexTop>
          <Num $size={51} $ls={-0.8} $weight={500} $color="#13a65b">3822.90</Num>
          <svg width="29" height="17" viewBox="0 0 29 17"><path d="M2 15L14.500 3 27 15" fill="none" stroke="#777" strokeWidth="2.800" /></svg>
        </IndexTop>
        <IndexName>上证指数<Num $size={36} $color="#13a65b">-1.16%</Num></IndexName>
      </IndexBlock>
      <Trade>买</Trade>
      <Trade>卖</Trade>
      <Trade>撤</Trade>
      <More>
        <svg width="56" height="56" viewBox="0 0 56 56">
          <circle cx="28" cy="28" r="25.500" fill="none" stroke="#333" strokeWidth="3.400" />
          <g fill="#333"><circle cx="17" cy="28" r="2.700" /><circle cx="28" cy="28" r="2.700" /><circle cx="39" cy="28" r="2.700" /></g>
        </svg>
        更多
      </More>
    </BottomBar>
  </Page>
);

const GlobalStyle = createGlobalStyle`
  * {
    box-sizing: border-box;
  }

  body {
    margin: 0;
    background: #fff;
    font-family: Roboto, "Noto Sans CJK SC", sans-serif;
  }

  svg {
    display: block;
    flex: none;
  }
`;

const Page = styled.div`
  width: 1216px;
  height: 2688px;
  overflow: hidden;
  display: flex;
  flex-direction: column;
  background: #fff;
`;

const Num = styled.span`
  font-size: ${(p) => p.$size}px;
  line-height: 1;
  letter-spacing: ${(p) => p.$ls || 0}px;
  font-weight: ${(p) => p.$weight || 400};
  color: ${(p) => p.$color || GREY};
  white-space: nowrap;
`;

const Top = styled.header`
  height: 502px;
  background: #22ad6b;
  color: #fff;
`;

const Status = styled.div`
  height: 122px;
  display: flex;
  align-items: center;
  padding-left: 68px;
`;

const Clock = styled.span`
  width: 138px;
  font-size: 52px;
  font-weight: 500;
  letter-spacing: -1.5px;
`;

const AppIcons = styled.div`
  display: flex;
  gap: 18px;
`;

const SystemIcons = styled.div`
  display: flex;
  align-items: center;
  margin-left: 261px;

  svg:nth-child(2) {
    margin-left: 15px;
  }
  svg:nth-child(3) {
    margin-left: 15px;
  }
  svg:nth-child(n + 4) {
    margin-left: 24px;
  }
  svg:nth-child(6) {
    margin-left: 15px;
  }
`;

const Nav = styled.div`
  height: 138px;
  display: grid;
  grid-template-columns: 240px 1fr 240px;
  align-items: center;

  > svg {
    margin-left: 63px;
  }
`;

const TitleBlock = styled.div`
  align-self: start;
`;

const TitleRow = styled.div`
  height: 64px;
  display: flex;
  justify-content: center;
  gap: 34px;
  align-items: center;
  margin-left: -2px;

  svg {
    margin-top: 40px;
  }
`;

const Title = styled.h1`
  margin: 4px 0 0;
  font-size: 57px;
  line-height: 64px;
  font-weight: 500;
`;

const CodeRow = styled.div`
  height: 68px;
  display: flex;
  align-items: center;
  justify-content: center;
  gap: 14px;
  margin-left: -4px;

  svg {
    margin-left: 4px;
  }
`;

const Tag = styled.span`
  height: 46px;
  padding: 0 4px;
  min-width: 48px;
  text-align: center;
  border: 2px solid #d8f3e4;
  border-radius: 8px;
  font-size: 36px;
  line-height: 42px;
  white-space: nowrap;
`;

const NavIcons = styled.div`
  display: flex;
  align-items: center;
  gap: 69px;
  margin-left: -9px;
`;

const PriceRow = styled.div`
  height: 138px;
  display: flex;
  align-items: center;
  justify-content: space-between;
  padding-left: 39px;

  > span {
    margin-top: 3px;
  }
`;

const RemindPill = styled.div`
  align-self: flex-start;
  width: 194px;
  height: 67px;
  margin-top: 61px;
  padding-left: 30px;
  display: flex;
  align-items: center;
  gap: 7px;
  border-radius: 34px 0 0 34px;
  background: #fff;
  color: #22aa68;
  font-size: 38px;
  line-height: 60px;
  font-weight: 500;
`;

const ChangeRow = styled.div`
  height: 104px;
  display: flex;
  align-items: center;
  padding: 5px 27px 0 39px;

  > svg {
    margin-left: 10px;
  }
`;

const Change = styled.span`
  width: ${(p) => p.$w}px;
  font-size: 45px;
  font-weight: 500;
`;

const ThinLine = styled.i`
  width: 2px;
  height: 31px;
  margin: 0 27px 0 2px;
  background: #8ad6b0;
`;

const Industry = styled.span`
  margin-right: 21px;
  font-size: 37.5px;
  line-height: 50px;
  margin-top: -3px;
  color: #97dcb9;
`;

const WatchPill = styled.div`
  width: 167px;
  height: 54px;
  margin: -21px 0 0 auto;
  display: flex;
  align-items: center;
  justify-content: center;
  gap: 8px;
  border: 2px solid #93dcb7;
  border-radius: 27px;
  background: #36b479;
  font-size: 37.5px;
  line-height: 46px;
  font-weight: 500;
`;

const Dash = styled.i`
  width: 31px;
  height: 4px;
  background: #fff;
`;

const StatsPanel = styled.section`
  position: relative;
  height: 231px;
  padding: 16px 41px 0 39px;
  display: grid;
  grid-template-columns: 379px 379px 1fr;
  grid-auto-rows: 65.5px;
  border-bottom: 2px solid #ebebeb;
`;

const Stat = styled.div`
  display: flex;
  align-items: center;
  justify-content: ${(p) => (p.$wide ? "space-between" : "flex-start")};
`;

const StatLabel = styled.span`
  min-width: 188px;
  margin-top: -2px;
  font-size: 41.5px;
  line-height: 60px;
  color: #8b8b8b;

  ${Stat}:nth-child(3n) & {
    min-width: 0;
  }
`;

const StatValue = styled.span`
  font-size: 45.5px;
  letter-spacing: -0.1px;
  line-height: 60px;
  color: ${(p) => p.$color || "#2e2e2e"};
  white-space: nowrap;
`;

const Corner = styled.i`
  position: absolute;
  right: 7px;
  bottom: 6px;
  border-left: 25px solid transparent;
  border-bottom: 25px solid #cbcbcb;
`;

const Banner = styled.div`
  height: 103px;
  padding: 0 44px 0 47px;
  display: flex;
  align-items: center;
`;

const BannerText = styled.span`
  flex: 1;
  margin: 0 0 0 24px;
  font-size: 45.3px;
  line-height: 60px;
  color: #666;
`;

const Band = styled.div`
  height: 16px;
  background: #fdfbfe;
`;

const Tabs = styled.nav`
  height: 109px;
  display: flex;
  align-items: center;
  border-bottom: 2px solid #e8e8e8;
`;

const Tab = styled.div`
  position: relative;
  width: ${(p) => (p.$more ? 223 : 173)}px;
  margin-right: ${(p) => (p.$more ? 41 : 0)}px;
  height: 107px;
  padding-bottom: 6px;
  display: flex;
  align-items: center;
  justify-content: center;
  gap: 16px;
  font-size: 47.5px;
  font-weight: 500;
  color: ${(p) => (p.$active ? "#e83f48" : "#3c3c3c")};

  &::after {
    content: "";
    display: ${(p) => (p.$active ? "block" : "none")};
    position: absolute;
    bottom: 0;
    width: 34px;
    height: 5px;
    border-radius: 3px;
    background: #df3e48;
  }
`;

const MaRow = styled.div`
  height: 76px;
  padding: 1px 13px 0;
  display: flex;
  align-items: center;
`;

const MaChip = styled.div`
  width: 95px;
  height: 65px;
  margin-right: 14px;
  display: flex;
  align-items: center;
  justify-content: center;
  gap: 2px;
  border-radius: 8px;
  background: #ededed;
  font-size: 40px;
  letter-spacing: -2px;
  color: #666;
`;

const MaValue = styled.span`
  width: ${(p) => p.$w}px;
  font-size: 39.5px;
  letter-spacing: -1px;
  color: ${(p) => p.$color};
`;

const ModeButton = styled.button`
  width: 98px;
  height: 65px;
  padding: 0 0 4px;
  margin-left: ${(p) => (p.$active ? "auto" : "13px")};
  border: 2.4px solid ${(p) => (p.$active ? "#dc4550" : "#9b9b9b")};
  border-radius: 8px;
  background: #fff;
  font-family: inherit;
  font-size: 35px;
  font-weight: ${(p) => (p.$active ? 500 : 400)};
  color: ${(p) => (p.$active ? "#dc4550" : "#999")};
`;

const Charts = styled.section`
  display: flex;
  padding-left: 11px;
  gap: 2px;
  height: 1156px;
`;

const Column = styled.div`
  display: flex;
  flex-direction: column;
`;

const Box = styled.div`
  width: 819px;
  height: ${(p) => p.$h}px;
  border: 2px solid #ededed;
  border-top-width: ${(p) => (p.$noTop ? 0 : 2)}px;
`;

const Dates = styled.div`
  width: 819px;
  height: 51px;
  padding: 0 18px;
  display: flex;
  align-items: center;
  justify-content: space-between;
  border: 2px solid #ededed;
  border-top: 0;
`;

const ChartSvg = styled.svg`
  overflow: visible;
  font-family: Roboto, "Noto Sans CJK SC", sans-serif;

  polyline {
    fill: none;
    stroke-width: 3;
    stroke-linejoin: round;
    stroke-linecap: round;
  }
`;

const SideBox = styled.div`
  width: 374px;
  height: 795px;
  border: solid #ededed;
  border-width: 2px 1px 2px 0;
`;

const ChipsWrap = styled.div`
  position: relative;
`;

const ChipsScale = styled.div`
  position: absolute;
  inset: 7px 4px 10px auto;
  display: flex;
  flex-direction: column;

  span:nth-child(2) {
    margin: 337px 0 328px;
  }
`;

const Percents = styled.div`
  width: 374px;
  height: 49px;
  padding: 0 7px;
  display: flex;
  align-items: center;
  border: solid #ededed;
  border-width: 0 2px 2px 1px;

  span:nth-child(2) {
    margin: 0 40px 0 auto;
  }
`;

const Info = styled.div`
  width: 374px;
  height: 313px;
  padding: 8px 10px 0 1px;
  font-size: 32.7px;
  color: #5f5f5f;
  border-bottom: 2px solid #ededed;
`;

const InfoRow = styled.div`
  height: 47px;
  display: flex;
  align-items: center;
  justify-content: space-between;

  > span:first-child {
    line-height: 47px;
    margin-top: -2px;
  }

  > span:last-child {
    margin-top: 2px;
  }
`;

const InfoFoot = styled(InfoRow)`
  margin-top: 19px;

  > span:first-child {
    margin-top: 4px;
  }

  a {
    line-height: 47px;
    margin-top: 0;
    color: #2f73c7;
  }
`;

const Toggle = styled.div`
  display: flex;
  height: 39px;
  margin: 6px -2px 6px 0;
  padding: 2px;
  border-radius: 20px;
  background: #f5f8fe;
`;

const ToggleItem = styled.span`
  flex: 1;
  border-radius: 18px;
  text-align: center;
  font-size: 32px;
  line-height: 33px;
  letter-spacing: -0.5px;
  background: ${(p) => (p.$active ? "#fff" : "transparent")};
  color: ${(p) => (p.$active ? "#111" : "#9c9c9c")};
`;

const Tools = styled.div`
  height: 131px;
  padding: 21px 39px 0;
  display: flex;
  gap: 20px;
`;

const Tool = styled.div`
  width: 254px;
  height: 81px;
  padding: 0 19px 0 23px;
  display: flex;
  align-items: center;
  justify-content: space-between;
  border: 2px solid #e6e3e7;
  border-radius: 41px;
  background: #fdfbfe;
  font-size: 38.7px;
  line-height: 75px;
  color: #666;

  svg {
    margin-left: -2px;
  }
`;

const ToolLine = styled.i`
  width: 3px;
  height: 52px;
  margin-top: 14px;
  background: #e2e0e3;
`;

const Sectors = styled.section`
  height: 200px;
  display: flex;
`;

const SectorTitle = styled.div`
  flex: none;
  width: 163px;
  padding: 53px 0 0 38px;
  font-size: 43.5px;
  line-height: 51px;
  font-weight: 700;
  color: #111;

  em {
    display: block;
    font-style: normal;
    color: #f03c46;
  }
`;

const SectorList = styled.div`
  flex: none;
  width: 1053px;
  display: flex;
  overflow: hidden;
  border-radius: 14px 0 0 0;
  background: #fdfbfe;
`;

const Sector = styled.div`
  flex: none;
  position: relative;
  width: 334px;
  padding-top: 40px;
  display: flex;
  flex-direction: column;
  align-items: center;
  font-size: 49px;
  line-height: 64px;
  font-weight: 500;
  color: #2e2e2e;

  &::after {
    content: "";
    position: absolute;
    right: 0;
    top: 63px;
    width: 2px;
    height: 79px;
    background: #d3d1d4;
  }
`;

const SectorPct = styled.span`
  font-size: 48px;
  line-height: 66px;
  letter-spacing: 0.2px;
  color: #13a65b;
`;

const BottomBar = styled.footer`
  height: 164px;
  display: flex;
  border-top: 2px solid #d9d7da;
  background: #fdfbfe;
`;

const IndexBlock = styled.div`
  width: 331px;
  padding: 28px 0 0 26px;
`;

const IndexTop = styled.div`
  height: 52px;
  display: flex;
  align-items: center;
  gap: 14px;

  svg {
    margin-top: -8px;
  }
`;

const IndexName = styled.div`
  height: 40px;
  margin-top: 3px;
  display: flex;
  align-items: center;
  gap: 13px;
  font-size: 38.3px;
  line-height: 44px;
  color: #666;
  white-space: nowrap;
`;

const Trade = styled.div`
  position: relative;
  width: 222px;
  text-align: center;
  font-size: 55px;
  line-height: 158px;
  font-weight: 500;
  color: #2c2c2c;

  &::before {
    content: "";
    position: absolute;
    left: 0;
    top: 35px;
    width: 2px;
    height: 91px;
    background: #dddbde;
  }
`;

const More = styled(Trade)`
  width: 219px;
  padding-top: 30px;
  display: flex;
  flex-direction: column;
  align-items: center;
  font-size: 34px;
  line-height: 54px;
  font-weight: 400;
  color: #666;
`;

export default App;
